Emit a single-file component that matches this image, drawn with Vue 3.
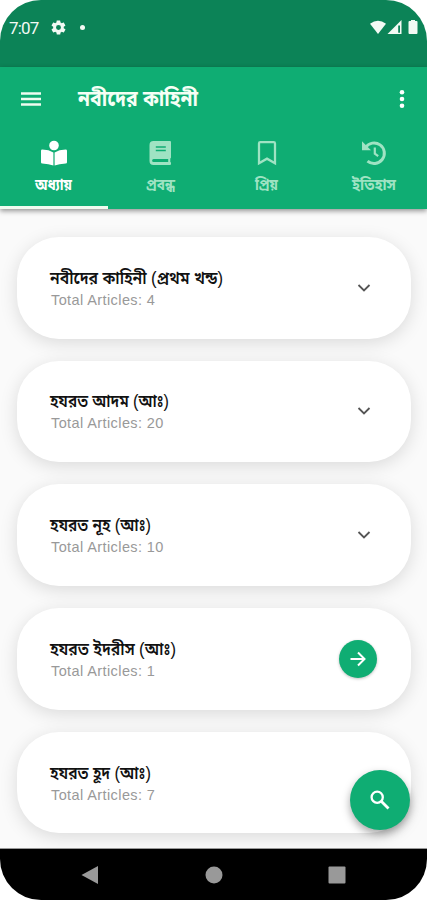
<script setup>
const tabs = [
  { label: 'অধ্যায়', icon: 'reader', active: true, w: 37 },
  { label: 'প্রবন্ধ', icon: 'book', w: 29 },
  { label: 'প্রিয়', icon: 'bookmark', w: 23 },
  { label: 'ইতিহাস', icon: 'history', w: 44 },
]
const chapters = [
  { title: 'নবীদের কাহিনী', note: 'প্রথম খন্ড', count: 4, expandable: true, w: 173 },
  { title: 'হযরত আদম', note: 'আঃ', count: 20, expandable: true, w: 119 },
  { title: 'হযরত নূহ', note: 'আঃ', count: 10, expandable: true, w: 101 },
  { title: 'হযরত ইদরীস', note: 'আঃ', count: 1, expandable: false, w: 126 },
  { title: 'হযরত হূদ', note: 'আঃ', count: 7, expandable: true, w: 101 },
]
</script>

<template>
  <div class="screen">
    <header class="status">
      <span class="time">7:07</span>
      <svg class="gear" viewBox="0 0 24 24"><path fill="currentColor" fill-rule="evenodd" d="M19.4 13c.1-.7.1-1.300 0-2l2.100-1.600c.2-.2.2-.4.1-.6l-2-3.500c-.1-.2-.4-.3-.6-.2l-2.500 1a7 7 0 0 0-1.700-1L14.400 2.400a.5.5 0 0 0-.5-.4h-4c-.2 0-.4.200-.5.400L9.100 5.100a7 7 0 0 0-1.700 1l-2.500-1c-.2-.1-.5 0-.6.2l-2 3.500c-.1.200 0 .4.100.6L4.500 11a8 8 0 0 0 0 2l-2.100 1.600c-.2.2-.2.4-.1.600l2 3.500c.1.200.4.300.6.200l2.500-1a7 7 0 0 0 1.700 1l.4 2.700c0 .2.200.4.500.4h4c.2 0 .5-.2.500-.4l.4-2.700a7 7 0 0 0 1.700-1l2.500 1c.2.100.5 0 .6-.2l2-3.500c.1-.2.100-.5-.1-.6zM12 15.500a3.500 3.500 0 1 1 0-7 3.500 3.500 0 0 1 0 7z"/></svg>
      <i class="dot"></i>
      <svg class="signals" viewBox="0 0 50 16">
        <path fill="currentColor" d="M0 3.700Q8-2.200 16 3.700L8 14z"/>
        <path fill="currentColor" d="M31.500 0v14H17.500z"/>
        <path class="cut" d="M28.200 5.500v7.300h1.800V5.500z"/>
        <path fill="currentColor" d="M41 1V0h4v1h1.500q1 0 1 1v11q0 1-1 1h-7q-1 0-1-1V2q0-1 1-1z"/>
      </svg>
    </header>

    <div class="appbar">
      <div class="toolbar">
        <svg class="menu" viewBox="0 0 20 14"><path d="M0 1.500h20M0 7h20M0 12.500h20"/></svg>
        <svg class="title" width="124" height="48" viewBox="0 0 124 48"><text x="1" y="31" textLength="120" lengthAdjust="spacingAndGlyphs">নবীদের কাহিনী</text></svg>
        <svg class="more" viewBox="0 0 6 18"><circle cx="3" cy="2.300" r="2.300"/><circle cx="3" cy="9" r="2.300"/><circle cx="3" cy="15.700" r="2.300"/></svg>
      </div>
      <nav class="tabs">
        <div v-for="t in tabs" :key="t.icon" class="tab" :class="{ active: t.active }">
          <svg v-if="t.icon === 'reader'" class="ticon" viewBox="0 0 26 26"><circle cx="13" cy="5.500" r="4.800" fill="currentColor"/><path fill="currentColor" d="M12.400 12.400Q8 9.700 1.300 9.500 0 9.500 0 10.800v11.400q0 1.300 1.300 1.400 6.500.4 11.100 2zM13.600 12.400Q18 9.700 24.700 9.500q1.300 0 1.300 1.300v11.400q0 1.300-1.300 1.400-6.500.4-11.100 2z"/></svg>
          <svg v-else-if="t.icon === 'book'" class="ticon" viewBox="0 0 26 26"><path fill="currentColor" fill-rule="evenodd" d="M6.500 1H23q1 0 1 1v15.500q0 .7-.7 1v3.600q.7.100.7 1V24q0 1-1 1H6.500Q2.500 25 2.500 21V5q0-4 4-4zM6.600 19a1.500 1.500 0 0 0 0 3h14.600v-3zM8.800 6.300v1.500h10V6.300zm0 3.500v1.500h10V9.800z"/></svg>
          <svg v-else-if="t.icon === 'bookmark'" class="ticon" viewBox="0 0 26 26"><path class="line" d="M5 3.500q0-1.300 1.300-1.300h13.400q1.300 0 1.300 1.300v19.800l-8-4.600-8 4.600z"/></svg>
          <svg v-else class="ticon" viewBox="0 0 26 26"><path class="line bold" d="M4.500 7.500A10.300 10.300 0 1 1 6.500 21.200"/><path fill="currentColor" d="M1 1.300v8.900h9z"/><path class="line thin" d="M13.800 7.500v6.200l3.400 2.500"/></svg>
          <svg class="tlabel" :width="t.w + 8" height="36"><text x="4" y="23" :textLength="t.w" lengthAdjust="spacingAndGlyphs">{{ t.label }}</text></svg>
        </div>
      </nav>
    </div>

    <main class="list">
      <article v-for="c in chapters" :key="c.title" class="card">
        <div class="info">
          <svg class="name" :width="c.w + 6" height="36"><text x="2" y="23" :textLength="c.w" lengthAdjust="spacingAndGlyphs">{{ c.title }} <tspan class="paren">(</tspan>{{ c.note }}<tspan class="paren">)</tspan></text></svg>
          <span class="count">Total Articles: {{ c.count }}</span>
        </div>
        <svg v-if="c.expandable" class="chevron" viewBox="0 0 14 10"><path d="M1.500 2 7 7.500 12.500 2"/></svg>
        <span v-else class="go"><svg viewBox="0 0 16 16"><path d="M0.500 8h14M8 1.500 14.500 8 8 14.500"/></svg></span>
      </article>
      <button class="fab" aria-label="Search"><svg viewBox="0 0 20 20"><circle cx="7.200" cy="7.200" r="5.600"/><path d="M11.500 11.500l7 7"/></svg></button>
    </main>

    <footer class="navbar">
      <svg viewBox="0 0 18 18"><path d="M0.500 9 17 0v18z"/></svg>
      <svg viewBox="0 0 18 18"><circle cx="9" cy="9" r="8.500"/></svg>
      <svg viewBox="0 0 18 18"><rect x="0.500" y="0.500" width="17" height="17" rx="1"/></svg>
    </footer>
  </div>
</template>

<style>
body { background: #fff; }
</style>
<style scoped>
.screen { width: 427px; height: 900px; display: flex; flex-direction: column; overflow: hidden; border-radius: 41px; background: #fafafa; font-family: "Liberation Sans", "Noto Sans Bengali", sans-serif; }
svg { display: block; flex: none; overflow: visible; }
.status { height: 67px; flex: none; box-sizing: border-box; display: flex; align-items: flex-start; padding: 18px 7px 0 9px; background: #0c8357; color: #f3faf4; }
.time { font: 17px/20px Roboto, sans-serif; width: 31px; letter-spacing: -.8px; white-space: nowrap; }
.gear { width: 17px; height: 17px; margin: 1px 0 0 10px; }
.dot { width: 5px; height: 5px; border-radius: 50%; background: #f3faf4; margin: 7px auto 0 13px; }
.signals { width: 50px; height: 16px; margin-top: 2px; }
.cut { fill: #0c8357; }
.appbar { height: 142px; flex: none; position: relative; z-index: 1; background: #0fad73; box-shadow: 0 2px 5px rgba(0,0,0,.42); color: #fff; }
.toolbar { height: 64px; display: flex; align-items: center; padding: 0 22px 0 21px; }
.menu { width: 20px; height: 14px; }
.menu path { stroke: #eefcf0; stroke-width: 2.400; }
.title { margin: 0 auto 0 36px; }
.title text { font-size: 22px; font-weight: 700; fill: #f5fff5; }
.more { width: 6px; height: 18px; fill: #fff; }
.tabs { height: 78px; display: grid; grid-template-columns: repeat(4, 1fr); }
.tab { display: flex; flex-direction: column; align-items: center; height: 78px; padding-top: 9px; box-sizing: border-box; color: #9fe3c3; }
.tab.active { color: #fff; border-bottom: 3px solid #f0fbf0; margin-right: -1px; }
.ticon { width: 26px; height: 26px; }
.line { fill: none; stroke: currentColor; stroke-width: 2.300; }
.bold { stroke-width: 3; }
.thin { stroke-width: 2.200; }
.tlabel { margin-top: 1px; }
.tlabel text { fill: currentColor; font-size: 15.500px; font-weight: 700; }
.list { flex: 1; min-height: 0; position: relative; padding: 28px 16px 0 17px; overflow: hidden; border-bottom: 1px solid #999; display: flex; flex-direction: column; gap: 22.200px; }
.card { height: 101.500px; flex: none; box-sizing: border-box; border-radius: 42px; background: #fff; box-shadow: 0 4px 18px rgba(0,0,0,.13); display: flex; align-items: center; justify-content: space-between; padding: 0 34px 0 31px; }
.info { display: flex; flex-direction: column; }
.name { margin: -6px 0; }
.name text { font-size: 17px; font-weight: 600; fill: #111; }
.name .paren { font-weight: 400; font-size: 18px; }
.count { font-size: 14.500px; line-height: 18px; letter-spacing: .4px; color: #999; margin-left: 3px; }
.chevron { width: 14px; height: 10px; margin-right: 6px; }
.chevron path { fill: none; stroke: #555; stroke-width: 1.800; }
.go { width: 38px; height: 38px; border-radius: 50%; background: #0fad73; display: grid; place-items: center; box-shadow: 0 1px 3px rgba(0,0,0,.25); }
.go svg { width: 16px; height: 16px; }
.go path, .fab path, .fab circle { fill: none; stroke: #fff; stroke-width: 2; }
.fab { position: absolute; left: 350px; top: 561px; width: 60px; height: 60px; border: 0; padding: 0; border-radius: 50%; background: #0fad73; display: grid; place-items: center; box-shadow: 0 4px 8px rgba(0,0,0,.35); }
.fab svg { width: 20px; height: 20px; }
.fab path { stroke-width: 2.800; }
.fab circle { stroke-width: 2.300; }
.navbar { height: 51px; flex: none; background: #000; display: flex; align-items: center; justify-content: space-between; padding: 0 81px; box-sizing: border-box; }
.navbar svg { width: 18px; height: 18px; fill: #999; }
</style>
